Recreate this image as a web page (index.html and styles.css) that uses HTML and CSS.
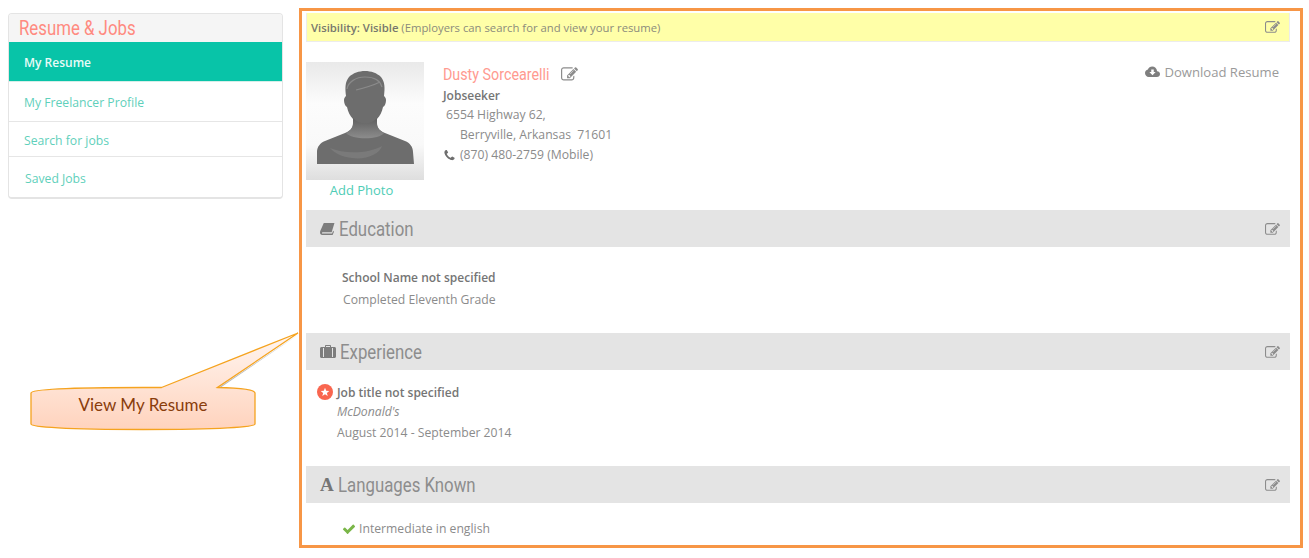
FILE: index.html
```html
<!DOCTYPE html>
<html lang="en">
<head>
<meta charset="utf-8">
<title>My Resume</title>
<link rel="stylesheet" href="styles.css">
</head>
<body>
<svg width="0" height="0" class="defs">
  <symbol id="i-edit" viewBox="0 0 1792 1792"><path d="M888 1184l116-116-152-152-116 116v56h96v96h56zm440-720q-16-16-33 1l-350 350q-17 17-1 33t33-1l350-350q17-17 1-33zm80 594v190q0 119-84.5 203.5t-203.5 84.5h-832q-119 0-203.5-84.5t-84.5-203.5v-832q0-119 84.5-203.5t203.5-84.5h832q63 0 117 25 15 7 18 23 3 17-9 29l-49 49q-14 14-32 8-23-6-45-6h-832q-66 0-113 47t-47 113v832q0 66 47 113t113 47h832q66 0 113-47t47-113v-126q0-13 9-22l64-64q15-15 35-7t20 29zm-96-738l288 288-672 672h-288v-288zm444 132l-92 92-288-288 92-92q28-28 68-28t68 28l152 152q28 28 28 68t-28 68z"/></symbol>
</svg>
<div class="page">
  <aside class="side">
    <h2 class="side-title"><span class="cond">Resume &amp; Jobs</span></h2>
    <a class="side-link side-link-active">My Resume</a>
    <a class="side-link">My Freelancer Profile</a>
    <a class="side-link side-link-short">Search for jobs</a>
    <a class="side-link side-link-last">Saved Jobs</a>
  </aside>
  <main class="frame">
    <div class="visibility">
      <span><b>Visibility: Visible</b> (Employers can search for and view your resume)</span>
      <svg class="edit"><use href="#i-edit"/></svg>
    </div>
    <section class="profile">
      <div class="photo-col">
        <div class="photo">
          <svg viewBox="0 0 118 118" width="118" height="118">
            <defs>
              <linearGradient id="bg" x1="0" y1="0" x2="0" y2="1">
                <stop offset="0" stop-color="#e9e9e9"/><stop offset=".35" stop-color="#fcfcfc"/><stop offset=".7" stop-color="#f9f9f9"/><stop offset="1" stop-color="#dedede"/>
              </linearGradient>
              <linearGradient id="neck" x1="0" y1="0" x2="0" y2="1">
                <stop offset="0" stop-color="#5f5f5f"/><stop offset="1" stop-color="#8c8c8c"/>
              </linearGradient>
            </defs>
            <rect width="118" height="118" fill="url(#bg)"/>
            <path fill="#6d6d6d" d="M11 102V90c0-5 3-9 8-11l20-8c5-2 8-5 8-10v-4c-3-3-5-7-6-12-2-1-3-4-3-7 0-2 1-3 2-4-1-8-1-14 3-19 4-4 10-6 16-6s12 2 16 6c4 5 4 11 3 19 1 1 2 2 2 4 0 3-1 6-3 7-1 5-3 9-6 12v4c0 5 3 8 8 10l20 8c5 2 8 6 8 11l1 12z"/>
            <path fill="url(#neck)" d="M47 56c6 7 18 7 24 0v6c0 4 3 7 7 9-5 7-32 7-38 0 4-2 7-5 7-9z"/>
            <path fill="#8a8a8a" d="M24 86c14 6 38 6 52-2 -2 8-16 14-30 12-10-1-18-5-22-10z" opacity=".45"/>
            <path fill="none" stroke="#8a8a8a" stroke-width="1.200" d="M41 27c1-7 9-12 18-12 8 0 15 3 17 10M50 28c8-2 16-4 24-8"/>
          </svg>
        </div>
        <a class="add-photo">Add Photo</a>
      </div>
      <div class="details">
        <div class="name-row"><span class="name cond">Dusty Sorcearelli</span><svg class="edit edit-name"><use href="#i-edit"/></svg></div>
        <div class="role">Jobseeker</div>
        <div class="addr1">6554 Highway 62,</div>
        <div class="addr2">Berryville, Arkansas&nbsp; 71601</div>
        <div class="phone">
          <svg class="phone-icon" viewBox="0 0 1792 1792"><path d="M1600 1240q0 27-10 70.5t-21 68.5q-21 50-122 106-94 51-186 51-27 0-53-3.5t-57.5-12.5-47-14.5-55.5-20.5-49-18q-98-35-175-83-127-79-264-216t-216-264q-48-77-83-175-3-9-18-49t-20.5-55.5-14.5-47-12.5-57.5-3.5-53q0-92 51-186 56-101 106-122 25-11 68.5-21t70.5-10q14 0 21 3 18 6 53 76 11 19 30 54t35 63.5 31 53.5q3 4 17.5 25t21.5 35.5 7 28.5q0 20-28.5 50t-62 55-62 53-28.5 46q0 9 5 22.5t8.5 20.5 14 24 11.5 19q76 137 174 235t235 174q2 1 19 11.5t24 14 20.5 8.5 22.5 5q18 0 46-28.5t53-62 55-62 50-28.5q14 0 28.5 7t35.5 21.5 25 17.5q25 15 53.5 31t63.5 35 54 30q70 35 76 53 3 7 3 21z"/></svg>
          <span>(870) 480-2759 (Mobile)</span>
        </div>
      </div>
      <a class="download">
        <svg class="cloud" viewBox="0 0 24 18"><path d="M19.4 7.6C18.8 3.3 15.600 0 11.500 0 8.400 0 5.700 1.900 4.600 4.800 2 5.400 0 7.700 0 10.600 0 14 2.700 17 6 17h13c2.800 0 5-2.300 5-4.900 0-2.400-2-4.400-4.600-4.500z"/><path fill="#fff" d="M10 5h4v4h3l-5 5-5-5h3z"/></svg>
        Download Resume
      </a>
    </section>

    <h3 class="bar">
      <span class="bar-title">
        <svg class="bar-icon" viewBox="0 0 16 14"><path d="M4 1h11.500l-3 10H2.800C1.700 11 1.700 12.500 2.800 12.500H13L14 9.500 15 10.500 13.500 14H2.500C0 14-.5 11.500.3 9.500z"/></svg>
        <span class="cond">Education</span>
      </span>
      <svg class="edit"><use href="#i-edit"/></svg>
    </h3>
    <div class="edu">
      <div class="strong">School Name not specified</div>
      <div class="edu-grade">Completed Eleventh Grade</div>
    </div>

    <h3 class="bar">
      <span class="bar-title">
        <svg class="bar-icon bar-icon-case" viewBox="0 0 16 13"><path d="M5 2V.8C5 .3 5.300 0 5.800 0h4.400c.5 0 .8.300.8.800V2h3.500c.8 0 1.500.7 1.500 1.500v8c0 .8-.7 1.500-1.500 1.500h-13C.7 13 0 12.300 0 11.500v-8C0 2.700.7 2 1.500 2zm1 0h4V1H6zM3 3v9h1V3zm9 0v9h1V3z"/></svg>
        <span class="cond">Experience</span>
      </span>
      <svg class="edit"><use href="#i-edit"/></svg>
    </h3>
    <div class="job">
      <svg class="job-badge" viewBox="0 0 16 16"><circle cx="8" cy="8" r="8" fill="#f9664f"/><polygon fill="#fff" points="8,3.800 9.200,6.700 12.300,6.900 9.900,8.900 10.700,11.900 8,10.300 5.300,11.900 6.100,8.900 3.700,6.900 6.800,6.700"/></svg>
      <div>
        <div class="strong">Job title not specified</div>
        <div class="company">McDonald's</div>
        <div class="dates">August 2014 - September 2014</div>
      </div>
    </div>

    <h3 class="bar">
      <span class="bar-title"><span class="bar-a">A</span><span class="cond">Languages Known</span></span>
      <svg class="edit"><use href="#i-edit"/></svg>
    </h3>
    <div class="lang">
      <svg class="check" viewBox="0 0 1792 1792"><path d="M1671 566q0 40-28 68l-724 724-136 136q-28 28-68 28t-68-28l-136-136-362-362q-28-28-28-68t28-68l136-136q28-28 68-28t68 28l294 295 656-657q28-28 68-28t68 28l136 136q28 28 28 68z"/></svg>
      <span>Intermediate in english</span>
    </div>
  </main>
</div>

<div class="callout">
  <svg class="callout-shape" viewBox="0 0 272 112" width="272" height="112">
    <defs>
      <linearGradient id="cg" x1="0" y1="0" x2="0" y2="1">
        <stop offset="0" stop-color="#fff6f1"/><stop offset="1" stop-color="#ffd3bd"/>
      </linearGradient>
    </defs>
    <path d="M270 1.500L190 56 188 56z" fill="#9a9a9a" opacity=".7"/>
    <path d="M131.500 55.500L268 1 187.500 55.500C212 56 225 57.500 225 61V92C225 95 190 97.500 113 97.500S1 95 1 92V61C1 57.500 40 55.500 113 55.500z" fill="url(#cg)" stroke="#f5a31f" stroke-width="1.300"/>
  </svg>
  <span class="callout-text">View My Resume</span>
</div>
</body>
</html>
```
FILE: styles.css
```css
* { box-sizing: border-box; }
html, body { margin: 0; padding: 0; }
body {
  width: 1309px;
  height: 558px;
  overflow: hidden;
  background: #fff;
  font-family: "Open Sans", "Noto Sans", sans-serif;
  font-size: 12.200px;
  color: #8b8b8b;
  position: relative;
}
.defs { position: absolute; }
.cond {
  display: inline-block;
  font-family: Roboto, "Liberation Sans", sans-serif;
  font-weight: 400;
  transform: scaleX(.84);
  transform-origin: left center;
}
.page {
  display: flex;
  align-items: flex-start;
  gap: 16px;
  padding: 8px 0 0 8px;
}
.side {
  width: 275px;
  margin-top: 5px;
  height: 186px;
  border: 1px solid #e4e4e4;
  border-bottom-width: 2px;
  border-radius: 4px;
  background: #fff;
  display: flex;
  flex-direction: column;
  overflow: hidden;
}
.side-title {
  margin: 0;
  height: 28px;
  background: #f5f5f5;
  padding: 1px 0 0 10px;
  font-weight: 400;
  font-size: 20px;
  line-height: 25px;
  color: #ff8a80;
}
.side-link {
  display: flex;
  align-items: center;
  height: 40px;
  padding: 1px 0 0 15px;
  border-bottom: 1px solid #e6e6e6;
  color: #5fd0bb;
}
.side-link-active { background: #08c4a8; color: #e9fbf7; font-weight: 600; font-size: 12px; border-bottom-color: #d5eee9; }
.side-link-short { height: 35px; padding-top: 2px; }
.side-link-last { flex: 1; border-bottom: 0; padding: 2px 0 0 16px; }
.frame {
  width: 1004px;
  height: 540px;
  border: 3px solid #f79646;
  padding: 2px 10px 0 4px;
  overflow: hidden;
}
.visibility {
  display: flex;
  justify-content: space-between;
  align-items: center;
  height: 29px;
  padding: 0 9px 0 4px;
  background: #ffffa8;
  border: 1px solid #ececec;
  border-width: 0 1px 1px 1px;
  font-size: 11.300px;
  color: #8b8b7c;
}
.visibility b { font-weight: 600; color: #77776d; }
.edit { width: 15px; height: 15px; fill: #8c8c8c; flex: none; }
.bar .edit { margin-top: 2px; }
.profile { display: flex; height: 168px; padding-top: 20px; position: relative; }
.photo-col { width: 118px; flex: none; display: flex; flex-direction: column; align-items: center; }
.photo { width: 118px; height: 118px; }
.photo svg { display: block; }
.add-photo { color: #4fcdb6; font-size: 13px; line-height: 18px; margin: 1px 7px 0 0; }
.details { margin-left: 19px; line-height: 20px; }
.name-row { display: flex; align-items: center; height: 24px; }
.name {
  width: 107px;
  font-size: 17px;
  white-space: nowrap;
  color: #ff9a90;
}
.edit-name { margin-left: 11px; width: 17px; height: 17px; }
.role { font-weight: 600; font-size: 12px; color: #757575; line-height: 19px; }
.addr1 { padding-left: 3px; }
.addr2 { padding-left: 17px; }
.phone { display: flex; align-items: center; }
.phone-icon { width: 13px; height: 13px; fill: #6e6e6e; margin-right: 4px; }
.download {
  position: absolute;
  top: 21px;
  right: 11px;
  display: flex;
  align-items: center;
  gap: 4px;
  font-size: 13.100px;
  color: #9a9a9a;
}
.cloud { width: 15px; height: 12px; fill: #7f7f7f; }
.bar {
  margin: 0;
  height: 37px;
  background: #e4e4e4;
  display: flex;
  justify-content: space-between;
  align-items: center;
  padding: 0 10px 0 14px;
  font-weight: 400;
}
.bar-title {
  display: flex;
  align-items: center;
  font-size: 20px;
  line-height: 26px;
  color: #8d8d8d;
}
.bar-icon { width: 15px; height: 13px; fill: #7d7d7d; margin-right: 4px; }
.bar-icon-case { width: 16px; }
.bar-a {
  font-family: "Liberation Serif", serif;
  font-weight: 700;
  font-size: 19px;
  color: #757575;
  margin-right: 4px;
}
.strong { font-weight: 600; font-size: 12px; color: #757575; }
.edu { height: 86px; padding: 20px 0 0 36px; line-height: 22px; }
.edu-grade { padding-left: 1px; }
.job { display: flex; height: 96px; padding: 13px 0 0 11px; line-height: 20px; }
.job-badge { width: 16px; height: 16px; flex: none; margin: 1px 4px 0 0; }
.company { font-style: italic; line-height: 18px; }
.dates { line-height: 23px; }
.lang { display: flex; align-items: center; padding: 16px 0 0 36px; line-height: 20px; }
.check { width: 14px; height: 14px; fill: #7ab648; margin-right: 3px; }
.callout {
  position: absolute;
  left: 30px;
  top: 332px;
  width: 272px;
  height: 112px;
}
.callout-shape { display: block; }
.callout-text {
  position: absolute;
  left: 0;
  top: 62px;
  width: 226px;
  text-align: center;
  font-family: Lato, "Liberation Sans", sans-serif;
  font-size: 17px;
  line-height: 22px;
  color: #8a3d0c;
}
```
